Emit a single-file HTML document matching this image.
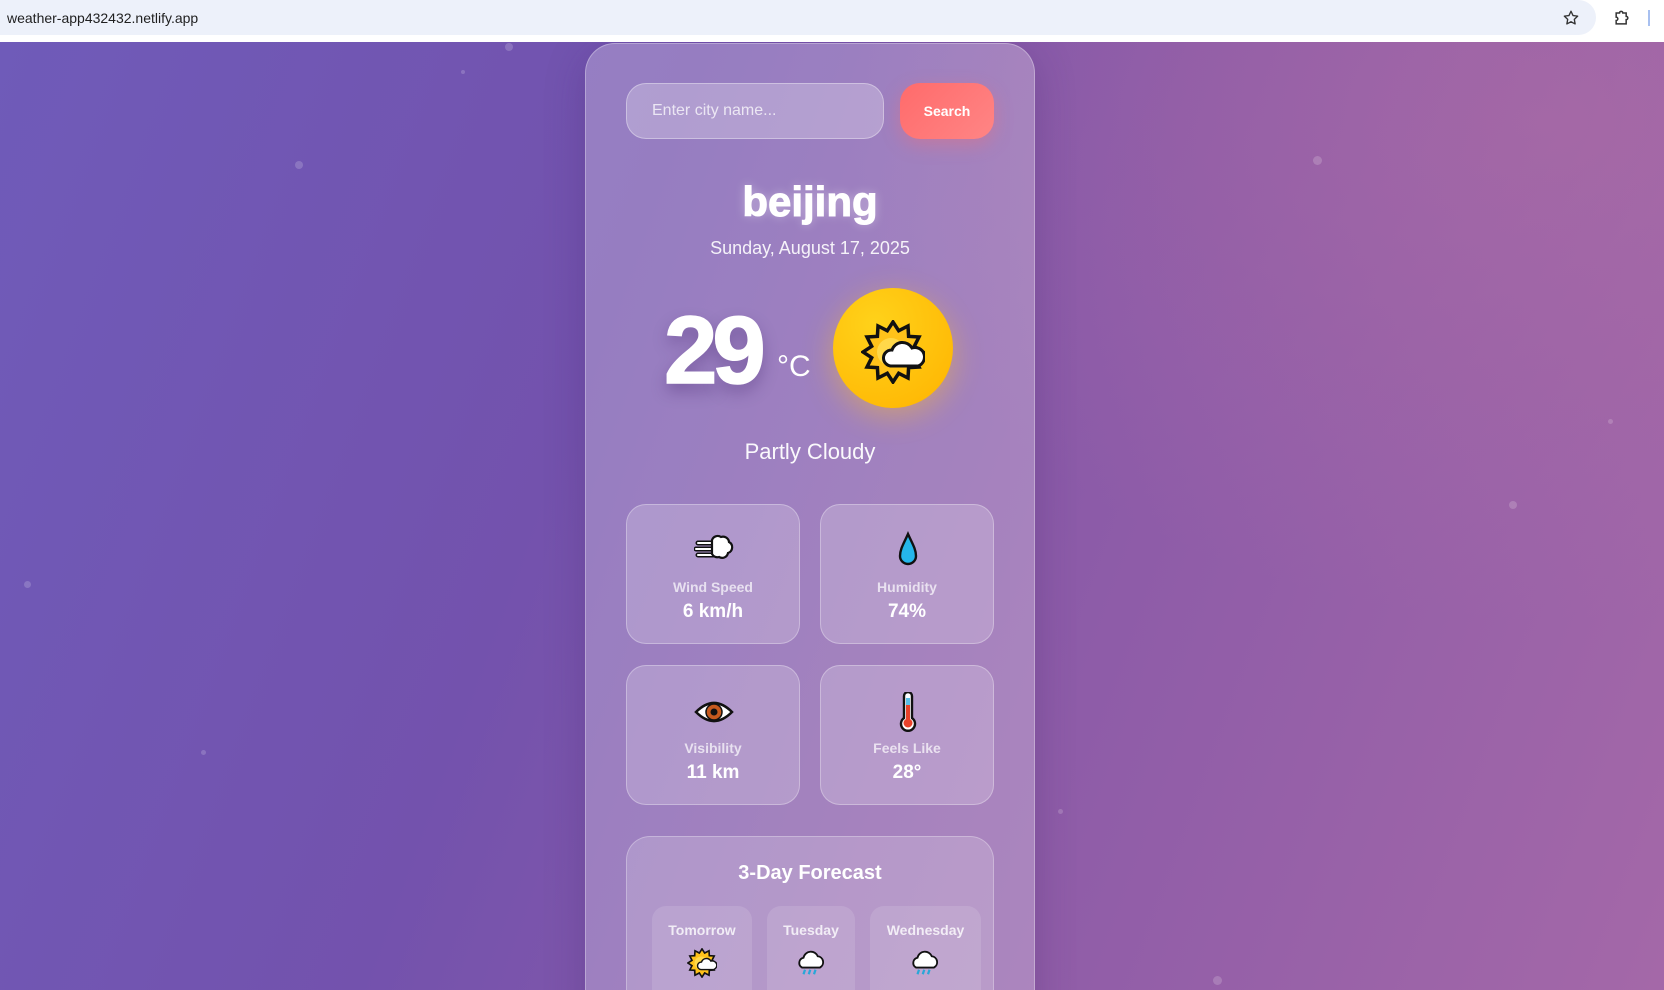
<!DOCTYPE html>
<html><head><meta charset="utf-8"><style>
*{box-sizing:border-box;margin:0;padding:0}
html{width:1664px;height:990px;overflow:hidden}
body{width:1664px;height:990px;overflow:hidden;font-family:"Liberation Sans",sans-serif;position:relative;background:#7352ad}
.chrome{position:absolute;left:0;top:0;width:1664px;height:42px;background:#fff}
.addr{position:absolute;left:0;top:0;width:1596px;height:35px;background:#edf1fa;border-radius:0 18px 18px 0}
.addr span{position:absolute;left:7px;top:10px;font-size:14px;color:#1f1f1f}
.bg{position:absolute;left:0;top:42px;width:1664px;height:948px;overflow:hidden;z-index:0;background:linear-gradient(110deg,#6f5bb9 0%,#7352ad 35%,#8a5aa8 60%,#a468a8 100%)}
.glow{position:absolute;inset:0;background:radial-gradient(ellipse 700px 500px at 1550px 80px,rgba(175,110,165,.55),transparent)}
.dot{position:absolute;border-radius:50%;background:rgba(255,255,255,.18)}
.card{position:absolute;left:585px;top:1px;width:450px;height:1000px;border-radius:30px;background:rgba(255,255,255,.25);border:1px solid rgba(255,255,255,.3);box-shadow:0 10px 40px rgba(60,30,100,.25)}
.abs{position:absolute}
.input{left:626px;top:83px;width:258px;height:56px;border-radius:20px;background:rgba(255,255,255,.25);border:1px solid rgba(255,255,255,.35);color:rgba(255,255,255,.75);font-size:16px;padding:18px 0 0 25px}
.btn{left:900px;top:83px;width:94px;height:56px;border-radius:20px;background:linear-gradient(135deg,#ff6b6b,#ff8585);color:#fff;font-weight:bold;font-size:14px;text-align:center;line-height:56px;box-shadow:0 6px 18px rgba(255,107,107,.35)}
.c{text-align:center;color:#fff}
.city{left:585px;width:450px;top:178px;font-size:42px;font-weight:bold;text-shadow:0 0 10px rgba(255,255,255,.4);-webkit-text-stroke:1px #fff}
.date{left:585px;width:450px;top:238px;font-size:18px;color:rgba(255,255,255,.9)}
.temp{left:664px;top:296px;font-size:96px;font-weight:bold;color:#fff;letter-spacing:-5px;text-shadow:0 8px 16px rgba(60,30,100,.35);-webkit-text-stroke:1.5px #fff}
.unit{left:777px;top:350px;font-size:30px;color:#fff}
.sun{left:833px;top:288px;width:120px;height:120px;border-radius:50%;background:radial-gradient(circle at 35% 30%,#ffd21a,#ffb300);box-shadow:0 8px 30px rgba(255,190,40,.45)}
.desc{left:585px;width:450px;top:439px;font-size:22px;color:rgba(255,255,255,.95)}
.stat{width:174px;height:140px;border-radius:20px;background:rgba(255,255,255,.2);border:1px solid rgba(255,255,255,.3)}
.stat svg{position:absolute;left:67px;top:26px}
.stat .l{position:absolute;left:0;width:100%;top:74px;text-align:center;font-size:14px;font-weight:bold;color:rgba(255,255,255,.7)}
.stat .v{position:absolute;left:0;width:100%;top:96px;text-align:center;font-size:19px;font-weight:bold;color:#fff}
.fc{left:626px;width:368px;height:200px;border-radius:24px;background:rgba(255,255,255,.18);border:1px solid rgba(255,255,255,.28)}
.fct{left:626px;width:368px;font-size:20px;font-weight:bold}
.day{height:120px;border-radius:14px;background:rgba(255,255,255,.12)}
.day .l{position:absolute;top:16px;width:100%;text-align:center;font-size:14px;font-weight:bold;color:rgba(255,255,255,.8)}
.day svg{position:absolute;top:42px}
</style></head><body>
<div class="chrome"><div class="addr"><span>weather-app432432.netlify.app</span>
<svg class="abs" style="left:1562px;top:9px" width="18" height="18" viewBox="0 0 24 24"><path d="M12 3l2.7 5.7 6.2.8-4.5 4.3 1.1 6.1L12 17l-5.5 2.9 1.1-6.1L3.1 9.5l6.2-.8z" fill="none" stroke="#333" stroke-width="1.8" stroke-linejoin="round"/></svg>
</div>
<svg class="abs" style="left:1612px;top:8px" width="20" height="20" viewBox="0 0 24 24"><path d="M5 6h4a2 2 0 0 1 4 0h4v4a2 2 0 0 1 0 4v5H5v-4a2 2 0 0 0 0-4z" fill="none" stroke="#333" stroke-width="1.8"/></svg>
<div class="abs" style="left:1648px;top:10px;width:2px;height:16px;background:#a8c0f0"></div>
</div>
<div class="bg">
<div class="glow"></div>
<div class="dot" style="left:505px;top:1px;width:8px;height:8px"></div>
<div class="dot" style="left:461px;top:28px;width:4px;height:4px"></div>
<div class="dot" style="left:295px;top:119px;width:8px;height:8px"></div>
<div class="dot" style="left:1313px;top:114px;width:9px;height:9px"></div>
<div class="dot" style="left:1608px;top:377px;width:5px;height:5px"></div>
<div class="dot" style="left:1509px;top:459px;width:8px;height:8px"></div>
<div class="dot" style="left:24px;top:539px;width:7px;height:7px"></div>
<div class="dot" style="left:201px;top:708px;width:5px;height:5px"></div>
<div class="dot" style="left:1058px;top:767px;width:5px;height:5px"></div>
<div class="dot" style="left:1213px;top:934px;width:9px;height:9px"></div>
<div class="card"></div>
</div>
<svg width="0" height="0" style="position:absolute"><defs>
<symbol id="sb" viewBox="-32 -32 64 64"><polygon points="30,0 21.3,5.7 26,15 15.6,15.6 15,26 5.7,21.3 0,30 -5.7,21.3 -15,26 -15.6,15.6 -26,15 -21.3,5.7 -30,0 -21.3,-5.7 -26,-15 -15.6,-15.6 -15,-26 -5.7,-21.3 0,-30 5.7,-21.3 15,-26 15.6,-15.6 26,-15 21.3,-5.7" fill="#ffc21a" stroke="#111" stroke-width="3.5" stroke-linejoin="miter"/><circle cx="-2" cy="0" r="14" fill="#ffd84a"/><path d="M-2 14a8 8 0 0 1 1-16 11 11 0 0 1 20-2 9 9 0 0 1 6 18z" fill="#fff" stroke="#111" stroke-width="3"/></symbol>
<symbol id="rc" viewBox="0 0 40 40"><path d="M8 26a7 7 0 0 1 2-13 10 10 0 0 1 19-2 8 8 0 0 1 3 15z" fill="#fff" stroke="#111" stroke-width="2.5"/><path d="M12 29l-2 6M19 29l-2 6M26 29l-2 6" stroke="#2aa7d8" stroke-width="3"/></symbol>
</defs></svg>
<div class="abs input">Enter city name...</div>
<div class="abs btn">Search</div>
<div class="abs c city">beijing</div>
<div class="abs c date">Sunday, August 17, 2025</div>
<div class="abs temp">29</div>
<div class="abs unit">°C</div>
<div class="abs sun"><svg class="abs" style="left:28px;top:32px" width="64" height="64"><use href="#sb"/></svg></div>
<div class="abs c desc">Partly Cloudy</div>

<div class="abs stat" style="left:626px;top:504px"><svg width="40" height="36" viewBox="0 0 40 36"><path d="M4 12h16M2 18h18M4 24h16" stroke="#111" stroke-width="5" stroke-linecap="round"/><path d="M4 12h16M2 18h18M4 24h16" stroke="#fff" stroke-width="2" stroke-linecap="round"/><path d="M18 9a6 6 0 0 1 9-3 6 6 0 0 1 8 5 6 6 0 0 1-1 11 6 6 0 0 1-9 4 6 6 0 0 1-7-3z" fill="#fff" stroke="#111" stroke-width="2.2"/></svg><div class="l">Wind Speed</div><div class="v">6 km/h</div></div>
<div class="abs stat" style="left:820px;top:504px"><svg width="40" height="40" viewBox="0 0 40 40"><path d="M20 3C16 12 12 18 12 25a8 8 0 0 0 16 0c0-7-4-13-8-22z" fill="#25b6ea" stroke="#111" stroke-width="2.4"/></svg><div class="l">Humidity</div><div class="v">74%</div></div>
<div class="abs stat" style="left:626px;top:665px"><svg width="40" height="40" viewBox="0 0 40 40"><path d="M2 20Q20 2 38 20Q20 38 2 20z" fill="#fff" stroke="#111" stroke-width="2.5"/><circle cx="20" cy="20" r="8" fill="#c65a1e" stroke="#111" stroke-width="1.5"/><circle cx="20" cy="20" r="3.5" fill="#111"/></svg><div class="l">Visibility</div><div class="v">11 km</div></div>
<div class="abs stat" style="left:820px;top:665px"><svg width="40" height="40" viewBox="0 0 40 40"><path d="M16 4a4 4 0 0 1 8 0v22a7 7 0 1 1-8 0z" fill="#fff" stroke="#111" stroke-width="2.4"/><rect x="18" y="6" width="4" height="7" fill="#5bc0e8"/><rect x="18" y="13" width="4" height="15" fill="#e8422a"/><circle cx="20" cy="31" r="4.5" fill="#e8422a"/></svg><div class="l">Feels Like</div><div class="v">28°</div></div>

<div class="abs" style="left:0;top:836px;width:1664px;height:154px;overflow:hidden">
<div class="abs fc" style="top:0"></div>
<div class="abs c fct" style="top:26px">3-Day Forecast</div>
<div class="abs day" style="left:652px;width:100px;top:70px"><div class="l">Tomorrow</div><svg style="left:35px" width="30" height="30"><use href="#sb"/></svg></div>
<div class="abs day" style="left:767px;width:88px;top:70px"><div class="l">Tuesday</div><svg style="left:29px" width="30" height="30"><use href="#rc"/></svg></div>
<div class="abs day" style="left:870px;width:111px;top:70px"><div class="l">Wednesday</div><svg style="left:40px" width="30" height="30"><use href="#rc"/></svg></div>
</div>
</body></html>
